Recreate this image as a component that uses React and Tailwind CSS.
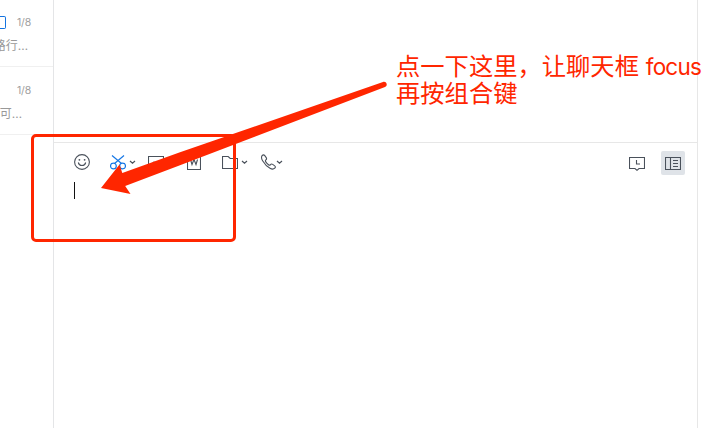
const ink = "#4a515b";

function Icon({ w = 16, h = 16, className = "", children }) {
  return (
    <svg width={w} height={h} viewBox={`0 0 ${w} ${h}`} fill="none" stroke={ink} strokeWidth="1.1" className={`block shrink-0 ${className}`}>
      {children}
    </svg>
  );
}

function Chevron({ className = "" }) {
  return (
    <Icon w={7} h={16} className={className}>
      <path d="M1 7l2.500 2.200L6 7" strokeWidth="1.2" />
    </Icon>
  );
}

function Conversation({ date, preview, tag, end }) {
  return (
    <div className={`flex h-[68px] shrink-0 flex-col items-end border-b border-[#f0f0f0] ${tag ? "-mt-px" : ""}`}>
      <div className="mt-[17px] flex h-[14px] w-full items-center justify-between pr-[22px]">
        <span className={tag ? "-mt-px h-[13px] w-[6px] rounded-r-[2px] border border-l-0 border-[#1473e0]" : ""} />
        <span className="text-[10.5px] leading-[14px] tracking-[-0.2px] text-[#a0a0a0]">{date}</span>
      </div>
      <div className={`mt-[7px] whitespace-nowrap text-[12px] leading-[18px] text-[#999] ${end}`}>{preview}</div>
    </div>
  );
}

export default function App() {
  return (
    <div className="relative flex h-[428px] w-[727px] overflow-hidden bg-white font-['Inter','Noto_Sans_CJK_SC',sans-serif]">
      <aside className="flex w-[54px] shrink-0 flex-col overflow-hidden border-r border-[#e4e5e7]">
        <Conversation date="1/8" preview="路行…" tag end="pr-[25px]" />
        <Conversation date="1/8" preview="可…" end="pr-[31px]" />
      </aside>
      <main className="flex w-[644px] shrink-0 flex-col border-r border-[#e7e7e7]">
        <div className="h-[142px] shrink-0" />
        <section className="flex flex-1 flex-col border-t border-[#e7e7e7]">
          <div className="flex h-[38px] items-center pl-5 pr-3">
            <Icon>
              <circle cx="8" cy="8" r="7.4" />
              <path d="M4.3 8.500a3.800 3.800 0 0 0 7.400 0" />
              <circle cx="5.4" cy="5.8" r=".9" fill={ink} stroke="none" />
              <circle cx="10.6" cy="5.8" r=".9" fill={ink} stroke="none" />
            </Icon>
            <Icon className="ml-5">
              <g stroke="#1878e5" strokeWidth="1.2">
                <path d="M2 1.500l9.500 8M14 1.500l-9.500 8" />
                <circle cx="3.4" cy="12" r="2.9" />
                <circle cx="12.6" cy="12" r="2.9" />
              </g>
            </Icon>
            <Chevron className="ml-[3px]" />
            <Icon className="ml-3">
              <path d="M.5 2.500h15v13H.5zM1 13l5-5 3 3 3-3 4 4" />
            </Icon>
            <Icon w={14} className="ml-[23px]">
              <path d="M.5 1.500h13v14H.5z" />
              <path d="M3.500 5.500L5 10.500 7 5.500 9 10.500l1.500-5" />
            </Icon>
            <Icon className="ml-[21px]">
              <path d="M.5 2.500h5.700l2 2h7.300v10H.5z" />
            </Icon>
            <Chevron className="ml-[3px]" />
            <Icon className="ml-[13px]">
              <path d="M1.100 1.700C2 .6 3 .6 3.800 1.600l1.400 2c.7 1 .5 1.700-.5 2.500-.5.4-.4 1 .1 1.800.7 1.100 1.600 2 2.700 2.800.8.6 1.400.6 1.800.1.8-.9 1.500-1 2.400-.4l2 1.500c.9.7.9 1.400.1 2.200-1.200 1.200-2.800 1.300-4.800.2C5.900 12.600 3.500 10 1.600 6.800.4 4.700.2 2.900 1.100 1.700z" />
            </Icon>
            <Chevron className="-ml-px" />
            <div className="ml-auto flex items-center gap-4 pt-[2px]">
              <Icon>
                <path d="M.5 2.500h15v11H10L8 15.300 6 13.500H.5zM7.500 5v4H11" />
              </Icon>
              <div className="flex size-6 items-center justify-center rounded-[2px] bg-[#dfe3e8]">
                <Icon>
                  <path d="M.5 2.500h15v12H.5zM5.500 2.500v12M8 5.500h5M8 8.500h5M8 11.500h5" />
                </Icon>
              </div>
            </div>
          </div>
          <div className="ml-5 mt-px h-[17px] w-px bg-[#111]" />
        </section>
      </main>
      <div className="absolute left-[31px] top-[134px] h-[108px] w-[205px] rounded-[5px] border-3 border-[#ff2600]" />
      <svg className="absolute left-0 top-0" width="727" height="428" viewBox="0 0 727 428">
        <path d="M101 188L119.500 164.500 122.300 173 180 152.300 383 82C386.500 81 388.300 85.500 385 87L180 165.300 125.200 186 130.500 194z" fill="#ff2600" />
      </svg>
      <div className="absolute left-[396px] top-[53px] whitespace-nowrap text-[24.300px] leading-[26px] text-[#ff2600]">
        <div>点一下这里，让聊天框 <span className="text-[22.500px] tracking-[-0.8px]">focus</span></div>
        <div>再按组合键</div>
      </div>
    </div>
  );
}
